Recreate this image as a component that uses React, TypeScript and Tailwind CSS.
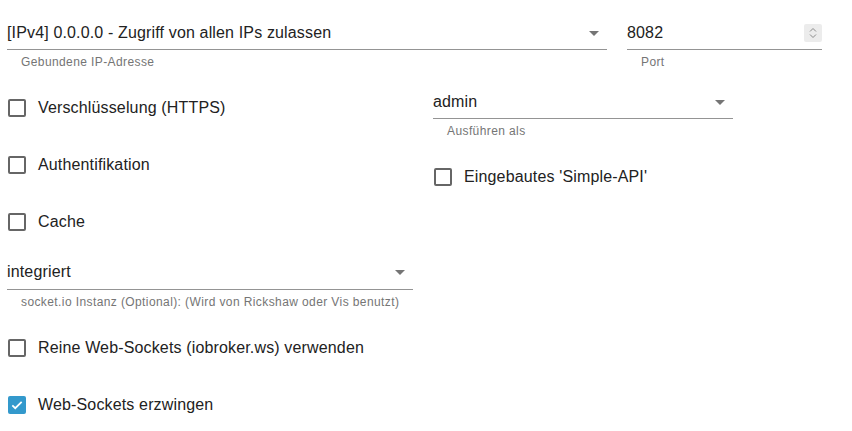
import React from 'react';

const Arrow = () => (
  <svg width="24" height="24" viewBox="0 0 24 24" className="shrink-0 text-[#757575]">
    <path d="M7 10l5 5 5-5z" fill="currentColor" />
  </svg>
);

type CheckProps = { label: string; checked?: boolean };

const Check: React.FC<CheckProps> = ({ label, checked }) => (
  <div className="flex items-center">
    {checked ? (
      <span className="ml-[1px] flex h-[18px] w-[18px] items-center justify-center rounded-[2px] bg-[#3399cc]">
        <svg width="14" height="14" viewBox="0 0 24 24">
          <path d="M4 12.5l5 5L20 6.5" fill="none" stroke="white" strokeWidth="3" />
        </svg>
      </span>
    ) : (
      <span className="ml-[1px] h-[18px] w-[18px] rounded-[2px] border-2 border-[#666]" />
    )}
    <span className="ml-[12px] text-[16px] leading-6 tracking-[0.15px] text-[#222]">{label}</span>
  </div>
);

type SelectProps = { value: string; helper: string; width: string; pb?: string };

const Select: React.FC<SelectProps> = ({ value, helper, width, pb = 'pb-1' }) => (
  <div className={width}>
    <div className={`flex items-center border-b border-[#949494] ${pb}`}>
      <span className="flex-1 pt-[1px] text-[16px] leading-6 tracking-[0.15px] text-[#222]">{value}</span>
      <span className="mr-[1px]">
        <Arrow />
      </span>
    </div>
    <div className="mt-[5px] pl-[14px] text-[12px] leading-[14px] tracking-[0.4px] text-[#757575]">{helper}</div>
  </div>
);

export default function App() {
  return (
    <div
      className="h-[431px] w-[852px] overflow-hidden bg-white pl-[7px] pt-[20px]"
      style={{ fontFamily: '"Liberation Sans", Arial, sans-serif' }}
    >
      <div className="flex">
        <Select value="[IPv4] 0.0.0.0 - Zugriff von allen IPs zulassen" helper="Gebundene IP-Adresse" width="w-[600px]" />
        <div className="ml-[20px] w-[195px]">
          <div className="flex items-center border-b border-[#949494] pb-1">
            <span className="flex-1 pt-[1px] text-[16px] leading-6 tracking-[0.15px] text-[#222]">8082</span>
            <span className="flex h-[18px] w-[18px] flex-col items-center justify-center rounded-[2px] bg-[#ececec]">
              <svg width="8" height="12" viewBox="0 0 8 12">
                <path d="M1 4.5l3-3 3 3M1 7.5l3 3 3-3" fill="none" stroke="#8a8a8a" strokeWidth="1" />
              </svg>
            </span>
          </div>
          <div className="mt-[5px] pl-[14px] text-[12px] leading-[14px] tracking-[0.4px] text-[#757575]">Port</div>
        </div>
      </div>

      <div className="mt-[10px] flex">
        <div className="w-[426px]">
          <div className="flex h-[57px] items-center">
            <Check label="Verschlüsselung (HTTPS)" />
          </div>
          <div className="flex h-[57px] items-center">
            <Check label="Authentifikation" />
          </div>
          <div className="flex h-[57px] items-center">
            <Check label="Cache" />
          </div>
        </div>
        <div className="pt-[10px]">
          <Select value="admin" helper="Ausführen als" width="w-[300px]" />
          <div className="mt-[27px]">
            <Check label="Eingebautes 'Simple-API'" />
          </div>
        </div>
      </div>

      <div className="mt-[9px]">
        <Select
          value="integriert"
          helper="socket.io Instanz (Optional): (Wird von Rickshaw oder Vis benutzt)"
          width="w-[406px]"
          pb="pb-[5px]"
        />
      </div>

      <div className="mt-[10px]">
        <div className="flex h-[57px] items-center">
          <Check label="Reine Web-Sockets (iobroker.ws) verwenden" />
        </div>
        <div className="flex h-[57px] items-center">
          <Check label="Web-Sockets erzwingen" checked />
        </div>
      </div>
    </div>
  );
}
